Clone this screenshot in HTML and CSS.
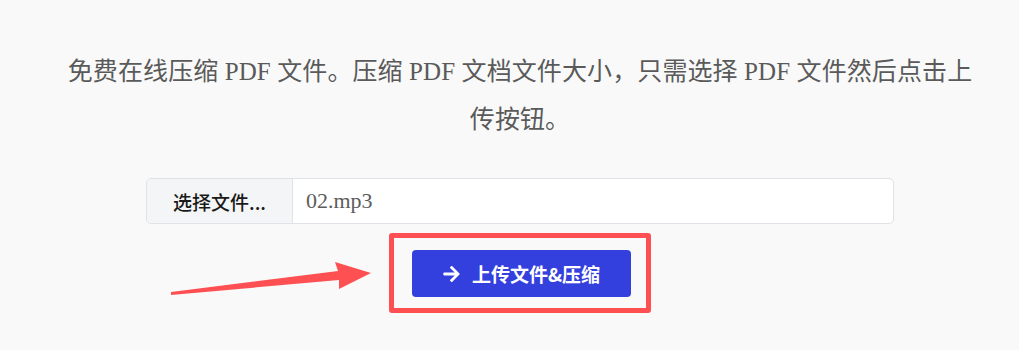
FILE: index.html
```html
<!DOCTYPE html>
<html lang="zh-CN">
<head>
    <meta charset="UTF-8">
    <meta name="viewport" content="width=device-width, initial-scale=1.0">
    <title>压缩 PDF</title>
    <link rel="stylesheet" href="styles.css">
</head>
<body>
    <div class="page">
        <p class="intro">免费在线压缩 PDF 文件。压缩 PDF 文档文件大小，只需选择 PDF 文件然后点击上传按钮。</p>

        <div class="file-group">
            <div class="file-btn">选择文件...</div>
            <div class="file-name">02.mp3</div>
        </div>

        <div class="upload-wrap">
            <div class="highlight">
                <button class="upload-btn">
                    <svg class="icon" viewBox="0 38 448 436"><path d="M190.5 66.9l22.2-22.2c9.4-9.4 24.6-9.4 33.9 0L441 239c9.4 9.4 9.4 24.6 0 33.9L246.6 467.3c-9.4 9.4-24.6 9.4-33.9 0l-22.2-22.2c-9.5-9.5-9.3-25 .4-34.3L311.4 296H24c-13.3 0-24-10.7-24-24v-32c0-13.3 10.7-24 24-24h287.4L190.9 101.2c-9.8-9.300-10-24.8-.4-34.3z" fill="#fff"/></svg>
                    <span>上传文件&amp;压缩</span>
                </button>
            </div>
        </div>
    </div>

    <!-- 标注箭头 -->
    <svg class="annot" width="1019" height="350" viewBox="0 0 1019 350">
        <polygon points="171,292 338,271 335,262 371,273 339,289 339,280 171,295" fill="#fe5053"/>
    </svg>
</body>
</html>
```

FILE: styles.css
```css
body {
    margin: 0;
    background: #f9f9f9;
    font-family: "Liberation Serif", "Noto Sans CJK SC", serif;
    position: relative;
    height: 350px;
    overflow: hidden;
}

.page {
    width: 920px;
    margin-left: 60px;
    padding-top: 48px;
    display: flex;
    flex-direction: column;
    align-items: center;
}

.intro {
    margin: 0;
    font-size: 25px;
    line-height: 48px;
    letter-spacing: 0.1px;
    color: #5a5a5a;
    text-align: center;
}

.file-group {
    margin-top: 34px;
    width: 748px;
    height: 46px;
    display: flex;
    border: 1px solid #dfe2e6;
    border-radius: 5px;
    background: #fff;
    overflow: hidden;
    box-sizing: border-box;
}

.file-btn {
    width: 145px;
    display: flex;
    align-items: center;
    justify-content: center;
    background: #f4f5f7;
    border-right: 1px solid #dfe2e6;
    font-family: "Noto Sans CJK SC", sans-serif;
    font-size: 19px;
    font-weight: 500;
    color: #1a1a1a;
}

.file-name {
    display: flex;
    align-items: center;
    padding-left: 13px;
    font-size: 22px;
    color: #5c5c5c;
}

.upload-wrap {
    margin-top: 9px;
}

.highlight {
    border: 5px solid #fe5053;
    border-radius: 3px;
    padding: 12px 15px 11px 18px;
}

.upload-btn {
    width: 219px;
    height: 47px;
    display: flex;
    align-items: center;
    padding: 0 0 0 31px;
    border: none;
    border-radius: 4px;
    background: #3340dd;
    color: #fff;
    font-family: "Noto Sans CJK SC", sans-serif;
    font-size: 19px;
    font-weight: bold;
    cursor: pointer;
}

.upload-btn .icon {
    width: 17px;
    height: 16px;
    margin-right: 12px;
    flex-shrink: 0;
}

.annot {
    position: absolute;
    left: 0;
    top: 0;
    pointer-events: none;
}
```
